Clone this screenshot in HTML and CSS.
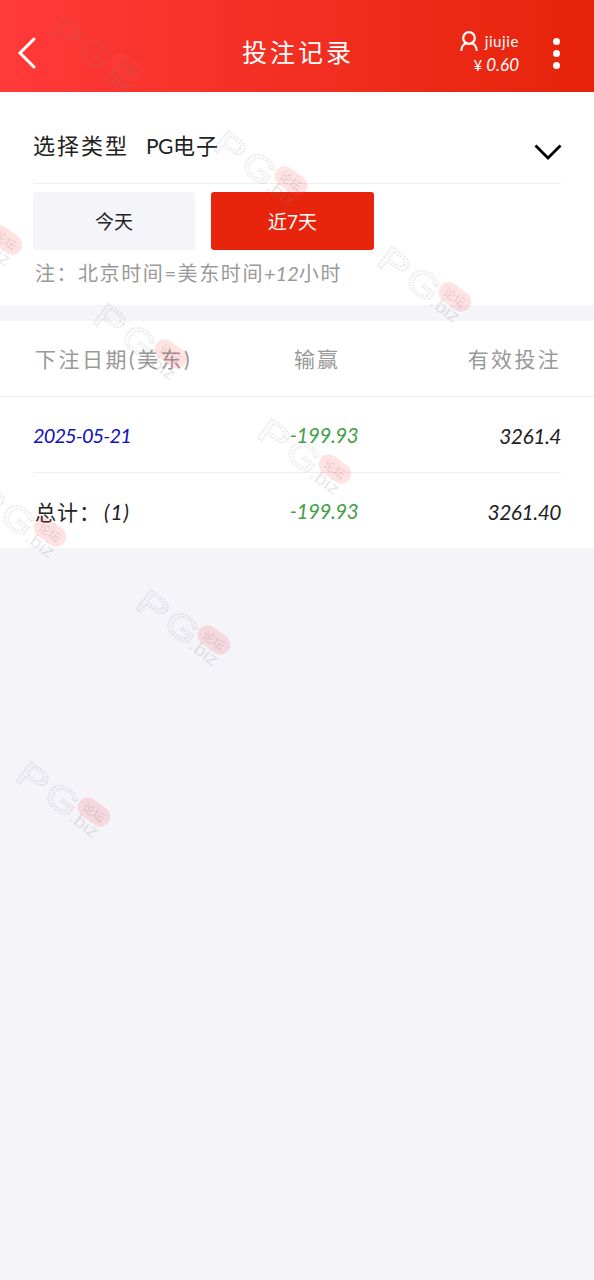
FILE: index.html
```html
<!DOCTYPE html>
<html lang="zh-CN">
<head>
<meta charset="utf-8">
<title>投注记录</title>
<link rel="stylesheet" href="styles.css">
</head>
<body>
<header class="topbar">
  <svg class="back" viewBox="0 0 20 34"><path d="M17 3 3 17l14 14"/></svg>
  <h1 class="title">投注记录</h1>
  <div class="account">
    <div class="user"><svg class="avatar" viewBox="0 0 18 20"><circle cx="9" cy="7" r="5.8"/><path d="M1.4 19c.3-4 3-6.500 5.200-6.900M16.600 19c-.3-4-3-6.500-5.200-6.900"/></svg><span class="name">jiujie</span></div>
    <div class="balance"><span class="yen">¥</span>0.60</div>
  </div>
  <div class="menu"><i class="dot"></i><i class="dot"></i><i class="dot"></i></div>
</header>
<section class="filter">
  <div class="type"><span class="type-label">选择类型</span><span class="type-value"><span class="pg">PG</span>电子</span>
    <svg class="chevron" viewBox="0 0 28 16"><path d="M1.500 1.500 14 14 26.500 1.500"/></svg></div>
  <div class="tabs"><button class="tab today">今天</button><button class="tab active">近7天</button></div>
  <p class="note"><span class="note-key">注：</span><span>北京时间=美东时间<span class="plus">+12</span>小时</span></p>
</section>
<section class="records">
  <div class="row head"><span class="date">下注日期(美东)</span><span class="result">输赢</span><span class="valid">有效投注</span></div>
  <div class="row item"><span class="date link">2025-05-21</span><span class="result">-199.93</span><span class="valid">3261.4</span></div>
  <div class="row item"><span class="date total">总计：<em class="count">(1)</em></span><span class="result">-199.93</span><span class="valid">3261.40</span></div>
</section>
<svg class="watermarks" viewBox="0 0 594 1280">
  <defs>
    <g id="stamp">
      <g transform="translate(0 20) rotate(37)">
        <text class="wm-letter" x="-2" y="0" textLength="31" lengthAdjust="spacingAndGlyphs">P</text>
        <text class="wm-letter" x="33" y="-1" textLength="33" lengthAdjust="spacingAndGlyphs">G</text>
        <text class="wm-biz" x="66" y="0" textLength="32" lengthAdjust="spacingAndGlyphs">.biz</text>
      </g>
      <g transform="translate(79 52) rotate(36)">
        <rect class="wm-pill" x="-18" y="-10" width="36" height="20" rx="10"/>
        <text class="wm-forum" x="-12" y="5">论坛</text>
      </g>
    </g>
  </defs>
  <use class="on-red" href="#stamp" x="48" y="15"/>
  <use href="#stamp" x="212" y="129"/>
  <use href="#stamp" x="-73" y="188"/>
  <use href="#stamp" x="376" y="245"/>
  <use href="#stamp" x="92" y="302"/>
  <use href="#stamp" x="256" y="417"/>
  <use href="#stamp" x="-29" y="480"/>
  <use href="#stamp" x="135" y="588"/>
  <use href="#stamp" x="15" y="760"/>
</svg>
</body>
</html>
```
FILE: styles.css
```css
* { box-sizing: border-box; }
body {
  margin: 0;
  height: 1280px;
  overflow: hidden;
  position: relative;
  background: #f4f4f9;
  color: #222;
  font-family: "Lato", "Noto Sans CJK SC", sans-serif;
  font-size: 22px;
}
svg { fill: none; }
.topbar {
  height: 92px;
  padding: 14px 33px 0 17px;
  display: grid;
  grid-template-columns: 150px 1fr 73px 42px;
  align-items: center;
  color: #fff;
  background: linear-gradient(90deg, #ff3a3a, #e62309);
}
.back { width: 20px; height: 34px; stroke: #fff; stroke-width: 3; stroke-linecap: round; }
.title {
  margin: -2px 0 0 75px;
  font-size: 25px;
  font-weight: 400;
  letter-spacing: 3px;
  line-height: 34px;
  white-space: nowrap;
}
.account { display: flex; flex-direction: column; align-items: flex-end; margin-left: -20px; }
.user { display: flex; align-items: center; gap: 7px; height: 24px; }
.avatar { width: 18px; height: 20px; stroke: #fff; stroke-width: 2.200; stroke-linecap: round; }
.name { font-size: 15px; letter-spacing: .6px; }
.balance { font-size: 17px; font-style: italic; line-height: 24px; letter-spacing: 0; }
.yen { font-size: 15px; font-style: normal; margin-right: 4px; }
.menu { display: flex; flex-direction: column; gap: 5px; align-items: flex-end; margin-right: 1px; }
.dot { width: 7px; height: 7px; border-radius: 50%; background: #fff; }
.filter { height: 213px; padding: 18px 33px 0; background: #fff; }
.type {
  height: 74px;
  border-bottom: 1px solid #eee;
  display: flex;
  align-items: center;
}
.type-label { width: 113px; letter-spacing: 2px; }
.type-label, .type-value { white-space: nowrap; line-height: 34px; margin-top: -2px; }
.type-value { letter-spacing: 1px; }
.pg { font-size: 21px; letter-spacing: -.5px; }
.chevron { width: 28px; height: 16px; stroke: #000; stroke-width: 2.800; margin: 11px -1px 0 auto; }
.tabs { display: flex; gap: 16px; padding-top: 8px; }
.tab {
  width: 162px;
  height: 58px;
  padding: 0 0 2px;
  border: 0;
  border-radius: 3px;
  background: #f4f4f9;
  color: #222;
  font: 19px "Lato", "Noto Sans CJK SC", sans-serif;
}
.active { width: 163px; background: #e8240c; color: #fff; }
.note {
  margin: 6px 0 0 2px;
  display: flex;
  font-size: 20px;
  line-height: 34px;
  color: #999;
  letter-spacing: 1.600px;
  white-space: nowrap;
}
.note-key { width: 43px; }
.plus { font-style: italic; letter-spacing: 0; }
.records { margin-top: 16px; background: #fff; }
.row {
  display: grid;
  grid-template-columns: 205px 158px 1fr;
  height: 76px;
  margin: 0 33px;
  align-items: center;
  border-bottom: 1px solid #eee;
  white-space: nowrap;
}
.head { margin: 0; padding: 0 33px 2px; color: #999; font-size: 21px; letter-spacing: 2px; }
.head .date { padding-left: 2px; letter-spacing: 2.500px; }
.head .valid { margin-right: 0; letter-spacing: 2.300px; }
.row:last-child { height: 75px; border: 0; }
.result { text-align: center; }
.valid { text-align: right; }
.item { font-size: 21px; font-style: italic; padding-top: 1px; }
.item .result { color: #43a047; font-size: 20.500px; letter-spacing: -.4px; padding-left: 14px; }
.item .valid { letter-spacing: -.5px; }
.link { color: #1010c0; font-size: 20px; letter-spacing: -.9px; }
.total { font-style: normal; padding-left: 2px; letter-spacing: 1px; }
.count { margin-left: 3px; }
.watermarks {
  position: absolute;
  left: 0;
  top: 0;
  width: 594px;
  height: 1280px;
  pointer-events: none;
}
.wm-letter {
  font: 400 35px "Liberation Sans", sans-serif;
  fill: none;
  stroke: #80808c;
  stroke-opacity: .17;
  stroke-width: 2;
  stroke-dasharray: 1.500 1;
}
.wm-biz { font: 18px "Liberation Sans", sans-serif; fill: #80808c; fill-opacity: .2; }
.wm-pill { fill: #ff5050; fill-opacity: .16; }
.wm-forum { font: 12px "Noto Sans CJK SC", sans-serif; fill: #806070; fill-opacity: .22; }
```
